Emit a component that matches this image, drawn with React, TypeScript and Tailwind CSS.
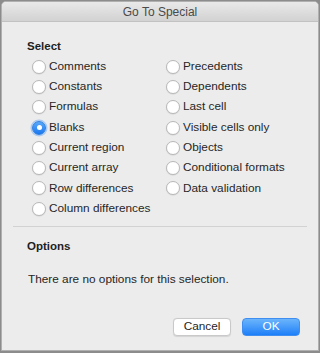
import React from "react";

const left = ["Comments", "Constants", "Formulas", "Blanks", "Current region", "Current array", "Row differences", "Column differences"];
const right = ["Precedents", "Dependents", "Last cell", "Visible cells only", "Objects", "Conditional formats", "Data validation"];

function Radio({ label, checked }: { label: string; checked?: boolean }) {
  return (
    <div className="flex items-center h-[20.3px]">
      {checked ? (
        <span className="w-[14px] h-[14px] rounded-full bg-gradient-to-b from-[#5aa9fb] to-[#1877ef] border border-[#2f7fe0] flex items-center justify-center shadow-[0_0_0_1.5px_rgba(90,160,250,0.45)]">
          <span className="w-[5px] h-[5px] rounded-full bg-white" />
        </span>
      ) : (
        <span className="w-[14px] h-[14px] rounded-full bg-white border border-[#b9b9b9] shadow-[0_0.5px_1px_rgba(0,0,0,0.12)]" />
      )}
      <span className="ml-[3px] text-[11.8px] text-[#262626] leading-none">{label}</span>
    </div>
  );
}

export default function App() {
  return (
    <div className="w-[320px] h-[353px] bg-[#8c8c8c] p-[1px]" style={{ fontFamily: '"Liberation Sans", Arial, sans-serif' }}>
      <div className="w-full h-[350px] bg-[#ececec] rounded-t-[5px] flex flex-col overflow-hidden border border-[#b0b0b0]">
        <div className="h-[20px] bg-gradient-to-b from-[#e9e9e9] to-[#d2d2d2] border-b border-[#c2c2c2] flex items-center justify-center text-[12px] text-[#4a4a4a]">
          Go To Special
        </div>
        <div className="pl-[25px] pt-[19px] text-[11.5px] font-bold text-[#1e1e1e] leading-none">Select</div>
        <div className="flex pl-[30px] pt-[4px]">
          <div className="w-[134px] flex flex-col">
            {left.map((l) => (
              <Radio key={l} label={l} checked={l === "Blanks"} />
            ))}
          </div>
          <div className="flex flex-col">
            {right.map((l) => (
              <Radio key={l} label={l} />
            ))}
          </div>
        </div>
        <div className="mx-[11px] mt-[7px] h-px bg-[#d2d2d2]" />
        <div className="pl-[25px] pt-[14px] text-[11.5px] font-bold text-[#1e1e1e] leading-none">Options</div>
        <div className="pl-[26px] pt-[22px] text-[11.8px] text-[#262626] leading-none">There are no options for this selection.</div>
        <div className="flex justify-end gap-[11px] pr-[18px] mt-[32px]">
          <button className="w-[58px] h-[18px] rounded-[4px] bg-white border border-[#c9c9c9] shadow-[0_0.5px_1px_rgba(0,0,0,0.1)] text-[11.8px] text-[#262626] leading-none flex items-center justify-center">
            Cancel
          </button>
          <button className="w-[58px] h-[18px] rounded-[4px] bg-gradient-to-b from-[#6ab4fb] to-[#1a7ff8] border border-[#3f8ef0] text-[11.8px] text-white leading-none flex items-center justify-center">
            OK
          </button>
        </div>
      </div>
    </div>
  );
}
